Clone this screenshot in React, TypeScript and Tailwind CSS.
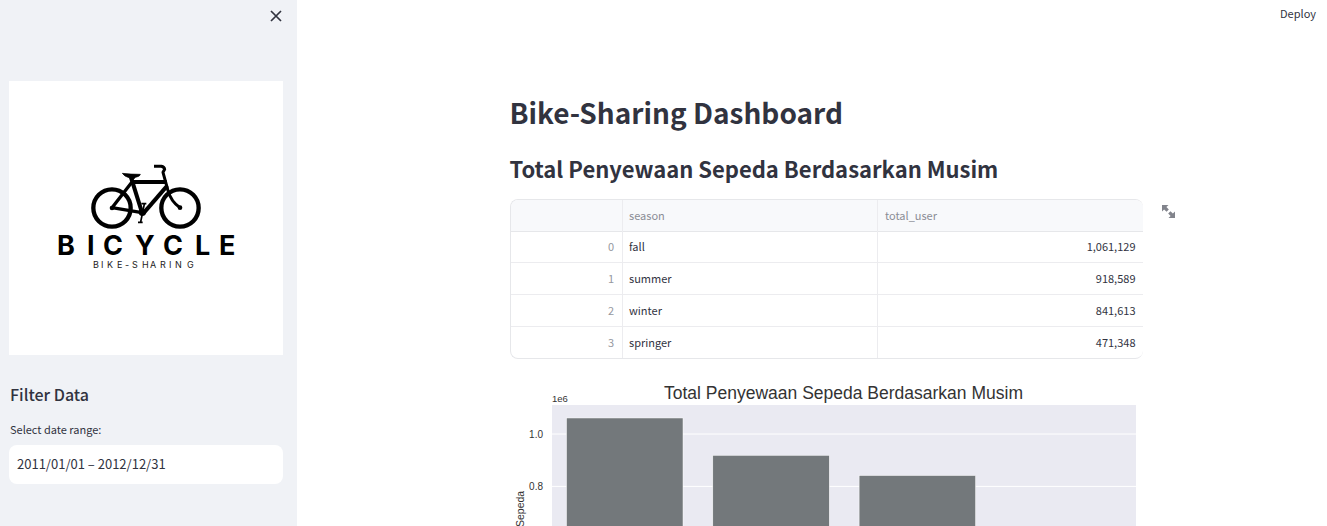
import React from "react";

type SeasonRow = { season: string; total: number };

const rows: SeasonRow[] = [
  { season: "fall", total: 1061129 },
  { season: "summer", total: 918589 },
  { season: "winter", total: 841613 },
  { season: "springer", total: 471348 },
];

function BicycleLogo() {
  return (
    <svg viewBox="0 0 274 274" className="block w-full bg-white" role="img" aria-label="Bicycle bike-sharing">
      <g transform="translate(31 69) scale(0.33333)" fill="none" stroke="#000" strokeLinejoin="round">
        <circle cx="216" cy="174" r="56" strokeWidth="13" />
        <circle cx="420" cy="174" r="56" strokeWidth="13" />
        <path d="M276 96 216 173 306 188" strokeWidth="10" strokeLinecap="round" />
        <path d="M273 82 306 188" strokeWidth="12" />
        <path d="M278 96H380" strokeWidth="12" />
        <path d="M382 107 310 190" strokeWidth="12" />
        <path d="M342 49H364Q373 51 374 58L369 67 384 122Q393 155 420 173" strokeWidth="9" />
        <path d="M247 70Q272 73 301 73 301 79 287 82L278 90 269 84Q252 79 247 70Z" fill="#000" strokeWidth="2" />
        <circle cx="307" cy="187" r="11" fill="#000" stroke="none" />
        <circle cx="216" cy="174" r="7" fill="#000" stroke="none" />
        <circle cx="420" cy="173" r="7" fill="#000" stroke="none" />
        <path d="M313 162 302 216M304 161H319M294 217H308" strokeWidth="5" />
      </g>
      <text x="48 78 94 126 154 186 210" y="174" fontSize="27" className="fill-black font-['Inter',sans-serif] font-bold">
        BICYCLE
      </text>
      <text
        x="84 92 98 108 116 123 133 141 151 160 166 178"
        y="187"
        fontSize="9"
        className="fill-[#222222] font-['Inter',sans-serif]"
      >
        BIKE-SHARING
      </text>
    </svg>
  );
}

/* Chart geometry, in viewBox units (two per CSS pixel at full width). */
const PLOT_TOP = 46;
const ZERO_Y = 628;
const UNIT = 524;

function SeasonChart() {
  return (
    <svg
      viewBox="0 0 1266 660"
      className="block w-full font-['Liberation_Sans',Arial,sans-serif]"
      role="img"
      aria-label="Total Penyewaan Sepeda Berdasarkan Musim"
    >
      <rect x="84" y={PLOT_TOP} width="1168" height={ZERO_Y - PLOT_TOP} fill="#eaeaf2" />
      {[0.2, 0.4, 0.6, 0.8, 1].map((v) => (
        <path key={v} d={`M84 ${ZERO_Y - v * UNIT}H1252`} stroke="#fff" strokeWidth="2" />
      ))}
      {rows.map((r, i) => {
        const h = (r.total / 1e6) * UNIT;
        return (
          <rect
            key={r.season}
            x={113 + i * 292.6}
            y={ZERO_Y - h}
            width="233"
            height={h}
            fill="#73787b"
            stroke="#fff"
            strokeWidth="1"
          />
        );
      })}
      <text x="667" y="34" textAnchor="middle" fontSize="35" fill="#333">
        Total Penyewaan Sepeda Berdasarkan Musim
      </text>
      <text x="84" y="39" fontSize="19" fill="#333">1e6</text>
      <text x="66" y="111" textAnchor="end" fontSize="20" fill="#333">1.0</text>
      <text x="66" y="215" textAnchor="end" fontSize="20" fill="#333">0.8</text>
      <text transform="translate(27 290) rotate(-90)" fontSize="21" fill="#333">Sepeda</text>
    </svg>
  );
}

export default function App() {
  return (
    <div className="flex h-screen overflow-hidden bg-white font-['Noto_Sans_CJK_SC',sans-serif] text-[#31333f]">
      <aside className="w-[297px] shrink-0 bg-[#f0f2f6] pr-3.5 pl-[9px]">
        <div className="flex h-[81px] justify-end">
          <button type="button" aria-label="Close sidebar" className="flex h-8 w-3.5 items-center justify-center">
            <svg viewBox="0 0 12 12" className="size-3" fill="none" stroke="currentColor" strokeWidth="1.7">
              <path d="M1 1 11 11M11 1 1 11" />
            </svg>
          </button>
        </div>
        <BicycleLogo />
        <h2 className="mt-[27px] pl-px text-base leading-6 font-medium">Filter Data</h2>
        <label htmlFor="range" className="mt-[13px] block pl-px text-[11px] leading-5">
          Select date range:
        </label>
        <input
          id="range"
          type="text"
          defaultValue="2011/01/01 – 2012/12/31"
          className="mt-1.5 block h-[39px] w-full rounded-lg bg-white px-2 pb-0.5 text-[13px] outline-none"
        />
      </aside>

      <main className="min-w-0 flex-1">
        <header className="flex h-20 items-start justify-end px-[11px] pt-1">
          <button type="button" className="text-[11px] leading-[18px]">Deploy</button>
        </header>
        <div className="pl-7">
          <div className="mx-auto w-full max-w-[633px]">
            <h1 className="pt-3 text-[28px] leading-10 font-bold">Bike-Sharing Dashboard</h1>
            <h2 className="mt-5 text-[22px] leading-8 font-bold">Total Penyewaan Sepeda Berdasarkan Musim</h2>
            <div className="relative mt-[15px]">
              <div className="h-[160px] overflow-hidden rounded-lg border border-r-0 border-[#e6e7ea]">
                <table className="h-full w-full table-fixed border-collapse text-[11px] leading-4">
                  <colgroup>
                    <col className="w-[112px]" />
                    <col className="w-[255px]" />
                    <col />
                  </colgroup>
                  <thead>
                    <tr className="h-[31px] border-b border-[#e6e7ea] bg-[#f8f9fb] text-left text-[#8b8d96]">
                      <th className="border-r border-[#ececef]" aria-label="Index" />
                      <th className="border-r border-[#ececef] px-1.5 font-normal">season</th>
                      <th className="px-[7px] font-normal">total_user</th>
                    </tr>
                  </thead>
                  <tbody>
                    {rows.map((r, i) => (
                      <tr key={r.season} className="border-b border-[#ececef] last:border-b-0">
                        <td className="border-r border-[#ececef] px-2 pb-0.5 text-right text-[#9698a0]">{i}</td>
                        <td className="border-r border-[#ececef] px-1.5 pb-0.5">{r.season}</td>
                        <td className="px-[7px] pb-0.5 text-right">{r.total.toLocaleString("en-US")}</td>
                      </tr>
                    ))}
                  </tbody>
                </table>
              </div>
              <button
                type="button"
                aria-label="View fullscreen"
                className="absolute top-1 left-full ml-[18px] flex size-4 items-center justify-center text-[#82848c]"
              >
                <svg viewBox="0 0 8 8" className="size-[13px]" fill="currentColor">
                  <path d="M0 0V4L1.3 2.7 2.8 4.2 4.2 2.8 2.7 1.3 4 0ZM5.2 3.8 3.8 5.2 5.3 6.7 4 8H8V4L6.7 5.3Z" />
                </svg>
              </button>
            </div>
            <div className="mt-[23px]">
              <SeasonChart />
            </div>
          </div>
        </div>
      </main>
    </div>
  );
}
